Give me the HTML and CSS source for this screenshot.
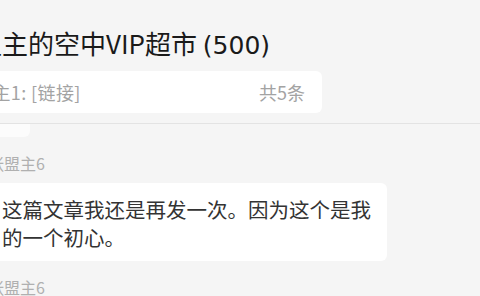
FILE: index.html
```html
<!DOCTYPE html>
<html lang="zh-CN">
<head>
  <meta charset="UTF-8">
  <meta name="viewport" content="width=device-width, initial-scale=1.0">
  <title>盟主的空中VIP超市</title>
  <link rel="stylesheet" href="styles.css">
</head>
<body>
  <div class="page">
    <div class="header">
      <h1 class="title">盟主的空中VIP超市 <span class="count">(500)</span></h1>
      <div class="notice">
        <span class="notice-text">盟主1: [链接]</span>
        <span class="notice-count">共5条</span>
      </div>
    </div>
    <div class="messages">
      <div class="bubble prev"></div>
      <div class="msg">
        <div class="name">张盟主6</div>
        <div class="bubble">这篇文章我还是再发一次。因为这个是我的一个初心。</div>
      </div>
      <div class="msg">
        <div class="name">张盟主6</div>
      </div>
    </div>
  </div>
</body>
</html>
```

FILE: styles.css
```css
body {
  margin: 0;
  background: #f5f5f5;
  font-family: "Noto Sans CJK SC", "Noto Sans", sans-serif;
  overflow: hidden;
}
.page {
  width: 480px;
  height: 296px;
  overflow: hidden;
}
.header {
  border-bottom: 1px solid #e3e3e3;
  padding: 25px 0 10px;
}
.title {
  margin: 0 0 10px -24px;
  height: 36px;
  font-size: 26px;
  font-weight: normal;
  line-height: 36px;
  color: #1a1a1a;
  white-space: nowrap;
}
.count {
  font-family: "DejaVu Sans", sans-serif;
  font-size: 25px;
  line-height: 1;
}
.notice {
  display: flex;
  justify-content: space-between;
  align-items: center;
  margin-left: -36px;
  width: 358px;
  height: 42px;
  padding: 0 17px 0 10px;
  box-sizing: border-box;
  background: #fff;
  border-radius: 6px;
  font-size: 18px;
  color: #a3a3a3;
}
.notice-text {
  letter-spacing: 0.4px;
}
.messages {
  margin-left: -14px;
  height: 172px;
  overflow: hidden;
}
.bubble {
  background: #fff;
  border-radius: 6px;
}
.bubble.prev {
  width: 44px;
  height: 40px;
  margin-top: -27px;
  background: #fcfcfc;
}
.msg {
  margin-top: 15px;
}
.name {
  font-size: 16px;
  line-height: 22px;
  color: #b0b0b0;
  padding-left: 2px;
  margin-bottom: 9px;
}
.msg .bubble {
  width: 401px;
  box-sizing: border-box;
  padding: 12px 14px 10px 16px;
  font-size: 20.5px;
  line-height: 28px;
  color: #333;
}
```
